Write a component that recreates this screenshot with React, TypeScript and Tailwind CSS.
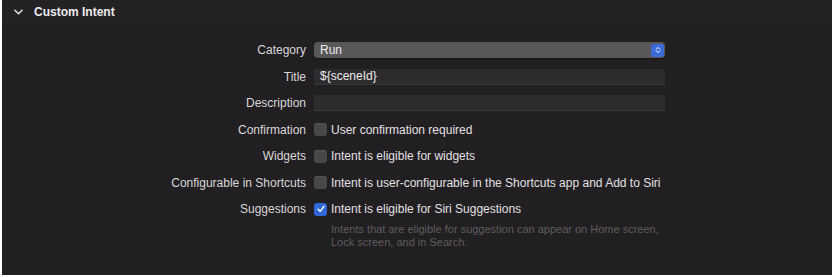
const FONT = { fontFamily: '"Liberation Sans", Arial, sans-serif' };

function Checkbox({ checked }: { checked?: boolean }) {
  if (checked) {
    return (
      <span className="flex size-[13px] shrink-0 items-center justify-center rounded-[3px] bg-[#2f68d8]">
        <svg viewBox="0 0 12 12" className="size-[10px]">
          <path d="M2.5 6.3 L5 8.8 L9.6 2.8" fill="none" stroke="white" strokeWidth="1.8" strokeLinecap="round" strokeLinejoin="round" />
        </svg>
      </span>
    );
  }
  return <span className="size-[13px] shrink-0 rounded-[3px] bg-[#4a474b] shadow-[inset_0_1px_0_rgba(255,255,255,0.08)]" />;
}

function Row({ label, children }: { label: string; children: React.ReactNode }) {
  return (
    <div className="flex h-[26.5px] items-center">
      <div className="w-[312px] shrink-0 pr-[8px] text-right text-[#d9d7d9]">{label}</div>
      <div className="flex min-w-0 flex-1 items-center">{children}</div>
    </div>
  );
}

function CheckRow({ label, text, checked }: { label: string; text: string; checked?: boolean }) {
  return (
    <Row label={label}>
      <Checkbox checked={checked} />
      <span className="ml-[4px] whitespace-nowrap text-[#e2e0e2]">{text}</span>
    </Row>
  );
}

export default function App() {
  return (
    <div className="h-[278px] w-[834px] bg-white" style={FONT}>
      <div className="ml-[2px] h-[275px] w-[830px] bg-[#221f22] text-[12px]">
        <div className="flex h-6 items-center bg-[#252225]">
          <svg viewBox="0 0 10 6" className="ml-[12px] h-[6px] w-[9px]">
            <path d="M1 1 L5 5 L9 1" fill="none" stroke="#e6e4e6" strokeWidth="1.6" strokeLinecap="round" strokeLinejoin="round" />
          </svg>
          <span className="ml-[11px] text-[12px] font-bold text-[#ecebec]">Custom Intent</span>
        </div>

        <div className="pt-[13px]">
          <Row label="Category">
            <div className="flex h-[16px] w-[351px] items-center rounded-[4px] bg-[#5a575a] pl-[6px] pr-[1px] text-[#ecebec] shadow-[0_1px_1px_rgba(0,0,0,0.3)]">
              <span className="flex-1">Run</span>
              <span className="flex h-[13px] w-[13px] items-center justify-center rounded-[3px] bg-[#3a6ad6]">
                <svg viewBox="0 0 8 10" className="h-[8px] w-[6px]">
                  <path d="M1.5 4 L4 1.5 L6.5 4 M1.5 6 L4 8.5 L6.5 6" fill="none" stroke="white" strokeWidth="1.3" strokeLinecap="round" strokeLinejoin="round" />
                </svg>
              </span>
            </div>
          </Row>
          <Row label="Title">
            <div className="flex h-[16px] w-[351px] items-center border-b border-[#3b383b] bg-[#2e2b2e] pl-[6px] text-[#ecebec]">
              {"${sceneId}"}
            </div>
          </Row>
          <Row label="Description">
            <div className="h-[16px] w-[351px] border-b border-[#3b383b] bg-[#2e2b2e]" />
          </Row>
          <CheckRow label="Confirmation" text="User confirmation required" />
          <CheckRow label="Widgets" text="Intent is eligible for widgets" />
          <CheckRow label="Configurable in Shortcuts" text="Intent is user-configurable in the Shortcuts app and Add to Siri" />
          <CheckRow label="Suggestions" text="Intent is eligible for Siri Suggestions" checked />
          <div className="ml-[329px] w-[345px] text-[11px] leading-[13px] text-[#5f5c5f]">
            Intents that are eligible for suggestion can appear on Home screen,
            Lock screen, and in Search.
          </div>
        </div>
      </div>
    </div>
  );
}
